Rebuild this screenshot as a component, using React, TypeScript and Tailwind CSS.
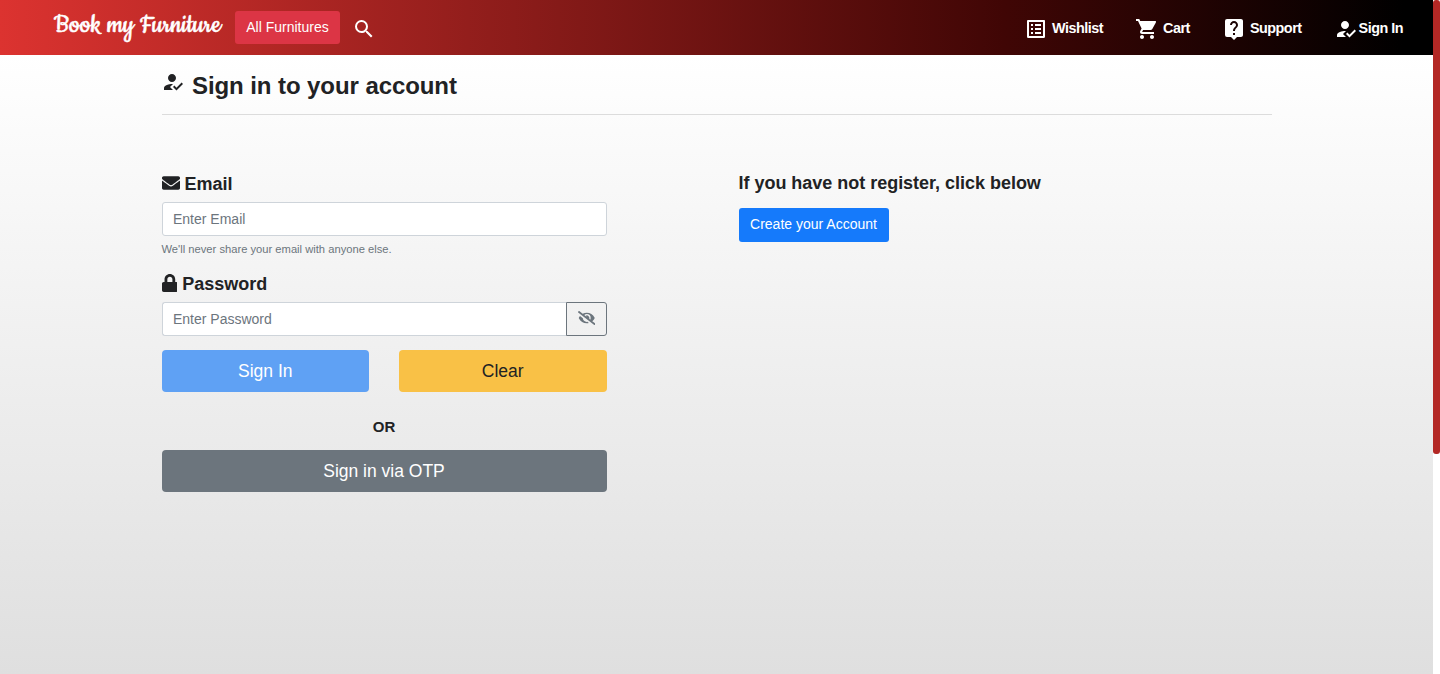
import type { ReactNode } from "react";
import { MdHowToReg, MdListAlt, MdLiveHelp, MdSearch, MdShoppingCart } from "react-icons/md";
import { FaEnvelope, FaEyeSlash, FaLock } from "react-icons/fa";

function NavLink({ icon, label, className = "" }: { icon: ReactNode; label: string; className?: string }) {
  return (
    <a href="#" className={`flex h-6 items-center whitespace-nowrap text-[14.4px] font-bold tracking-[-0.5px] text-white ${className}`}>
      {icon}
      <span className="pb-0.5 leading-5">{label}</span>
    </a>
  );
}

function Header() {
  return (
    <header className="flex h-[55px] items-start bg-[linear-gradient(to_right_in_srgb,#dc3330,#400605_70%,#000_98%)]">
      <a
        href="#"
        className="ml-[54px] mt-[9px] w-[181px] whitespace-nowrap text-[30px] leading-[33px] text-white [-webkit-text-stroke:0.5px_white] [font-family:'Cookie','Dancing_Script','Lato',cursive]"
      >
        Book my Furniture
      </a>
      <button className="mt-[11px] h-[33px] w-[105px] rounded-[3px] bg-[#dc3545] text-[14px] text-white">All Furnitures</button>
      <MdSearch className="mt-[17px] ml-3 size-6 text-white" />
      <nav className="mt-[17px] ml-auto flex pr-[30px]">
        <NavLink icon={<MdListAlt className="mr-1 size-6" />} label="Wishlist" />
        <NavLink icon={<MdShoppingCart className="mr-1 size-6" />} label="Cart" className="ml-8" />
        <NavLink icon={<MdLiveHelp className="mr-1 size-6" />} label="Support" className="ml-8" />
        <NavLink icon={<MdHowToReg className="mr-px size-6" />} label="Sign In" className="ml-8" />
      </nav>
    </header>
  );
}

export default function App() {
  return (
    <div className="flex h-[674px] w-full overflow-hidden bg-white text-[#212224] [font-family:'Liberation_Sans',Arial,sans-serif]">
      <div className="flex w-[1433px] flex-col">
        <Header />
        <main className="flex-1 bg-linear-to-b from-white to-[#dfdfdf] pl-[161.5px]">
          <div className="flex h-[60px] w-[1110px] items-start border-b border-[#dcdcdc] pt-[15px]">
            <MdHowToReg className="mr-[7.5px] -ml-px size-6" />
            <h1 className="mt-px text-[24px] leading-[30px] font-bold tracking-[-0.08px]">Sign in to your account</h1>
          </div>
          <div className="flex pt-[57px]">
            <form className="w-[445px]">
              <label className="flex h-[30px] items-start text-[18px] leading-6 font-bold">
                <FaEnvelope className="mt-0.5 mr-[5px] size-[18px]" />
                Email
              </label>
              <input
                placeholder="Enter Email"
                className="block h-[34px] w-full rounded-[3px] border border-[#ced4da] bg-white px-[10.5px] text-[14px] placeholder:text-[#6c757d]"
              />
              <p className="mt-[5px] h-[31px] text-[11.2px] leading-4 text-[#6c757d]">We'll never share your email with anyone else.</p>
              <label className="flex h-[30px] items-start text-[18px] leading-6 font-bold">
                <FaLock className="mt-0.5 mr-[5px] h-[18px] w-[15.75px]" />
                Password
              </label>
              <div className="flex h-[34px]">
                <input
                  placeholder="Enter Password"
                  className="w-[404px] rounded-l-[3px] border border-r-0 border-[#ced4da] bg-white px-[10.5px] text-[14px] placeholder:text-[#6c757d]"
                />
                <button type="button" className="flex w-[41px] items-center justify-center rounded-r-[3px] border border-[#6c757d] pb-0.5 pl-px text-[#6c757d]">
                  <FaEyeSlash className="h-[14px] w-[17.5px]" />
                </button>
              </div>
              <div className="mt-3.5 grid grid-cols-2 gap-[30px] text-[17.5px]">
                <button type="button" className="h-[42px] rounded-[4px] bg-[#5fa1f4] text-white">Sign In</button>
                <button type="button" className="h-[42px] rounded-[4px] bg-[#f9c146]">Clear</button>
              </div>
              <p className="mt-[25px] text-center text-[15px] leading-5 font-bold">OR</p>
              <button type="button" className="mt-[13px] h-[42px] w-full rounded-[4px] bg-[#6c757d] text-[17.5px] text-white">
                Sign in via OTP
              </button>
            </form>
            <section className="ml-[132px]">
              <h2 className="text-[18px] leading-[22px] font-bold tracking-[-0.02px]">If you have not register, click below</h2>
              <button className="mt-3.5 h-[34px] w-[150px] rounded-[3px] bg-[#157afb] pb-0.5 text-[14px] text-white">Create your Account</button>
            </section>
          </div>
        </main>
      </div>
      <div className="w-[7px] bg-white">
        <div className="h-[454px] rounded-[3px] bg-[#b32825]" />
      </div>
    </div>
  );
}
